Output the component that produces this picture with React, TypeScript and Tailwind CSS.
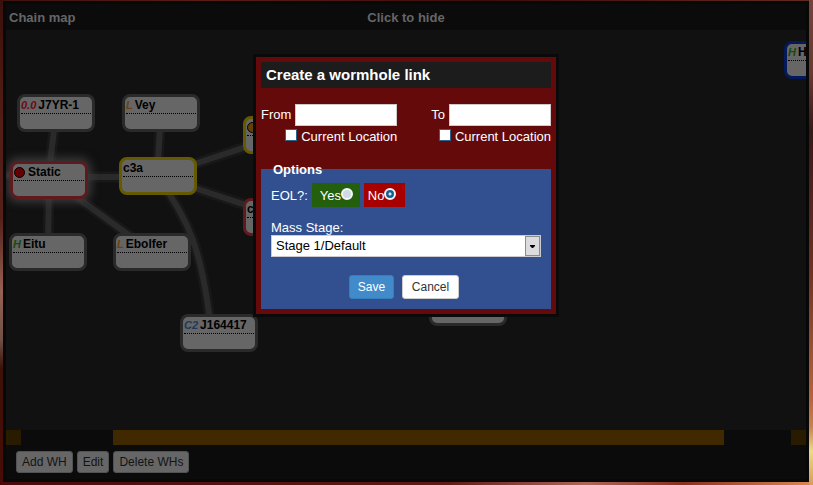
import { useState } from 'react';
import type { ReactNode } from 'react';

type NodeInfo = {
  id: string;
  name: string;
  place: string;
  look: string;
  tag?: string;
  tagColor?: string;
  dot?: string;
};

const nodes: NodeInfo[] = [
  { id: 'j7', name: 'J7YR-1', tag: '0.0', tagColor: 'text-[#6b0a14]', place: 'left-[11px] top-[64px]', look: 'border-[#2a2a2a]' },
  { id: 'vey', name: 'Vey', tag: 'L', tagColor: 'text-[#6b4310]', place: 'left-[116px] top-[64px]', look: 'border-[#2a2a2a]' },
  { id: 'static', name: 'Static', dot: 'bg-[#660000]', place: 'left-[4px] top-[131px]', look: 'border-[#5e1a1c] shadow-[0_0_10px_3px_#3c3c3c]' },
  { id: 'c3a', name: 'c3a', place: 'left-[113px] top-[127px]', look: 'border-[#665a00]' },
  { id: 'eitu', name: 'Eitu', tag: 'H', tagColor: 'text-[#154a10]', place: 'left-[3px] top-[203px]', look: 'border-[#2a2a2a]' },
  { id: 'ebolfer', name: 'Ebolfer', tag: 'L', tagColor: 'text-[#6b4310]', place: 'left-[107px] top-[203px]', look: 'border-[#2a2a2a]' },
  { id: 'j16', name: 'J164417', tag: 'C2', tagColor: 'text-[#1b3a5c]', place: 'left-[174px] top-[284px]', look: 'border-[#2a2a2a]' },
  { id: 'east', name: '', dot: 'bg-[#664200]', place: 'left-[237px] top-[86px]', look: 'border-[#665a00]' },
  { id: 'south', name: 'c', place: 'left-[237px] top-[168px]', look: 'border-[#5e1a1c]' },
  { id: 'far', name: '', place: 'left-[423px] top-[258px]', look: 'border-[#2a2a2a]' },
  { id: 'hs', name: 'H', tag: 'H', tagColor: 'text-[#154a10]', place: 'left-[778px] top-[11px]', look: 'border-[#04195c]' },
];

const links = [
  'M50 83 L42 150',
  'M155 83 L151 146',
  'M0 145 L43 150',
  'M43 147 L152 147',
  'M152 146 L276 105',
  'M152 146 L276 187',
  'M43 150 L42 222',
  'M43 147 L146 222',
  'M152 146 C180 190 195 210 205 300',
];

function MapNode({ node }: { node: NodeInfo }) {
  return (
    <div className={`absolute h-[38px] w-[78px] overflow-hidden rounded-lg border-[3px] bg-[#666] px-px ${node.place} ${node.look}`}>
      <div className="flex h-[17px] items-center gap-0.5 border-b border-dotted border-black text-xs font-bold whitespace-nowrap text-black">
        {node.dot && <span className={`mr-px h-[11px] w-[11px] shrink-0 rounded-full border border-black ${node.dot}`} />}
        {node.tag && <i className={`text-[11px] ${node.tagColor}`}>{node.tag}</i>}
        <span>{node.name}</span>
      </div>
    </div>
  );
}

function FooterButton({ children }: { children: ReactNode }) {
  return (
    <button type="button" className="h-[22px] rounded-[3px] border border-[#525252] bg-[#666] px-[5px] text-xs text-[#141414]">
      {children}
    </button>
  );
}

function Endpoint({ id, label }: { id: string; label: string }) {
  return (
    <div className="flex flex-col items-end">
      <div className="flex items-center gap-1">
        <label htmlFor={id}>{label}</label>
        <input id={id} type="text" className="h-[22px] w-[102px] border border-[#ccc] bg-white px-1 text-black" />
      </div>
      <label className="flex h-[22px] items-center gap-1">
        <input type="checkbox" className="mb-1 h-3 w-3 appearance-none border border-[#2c628b] bg-white checked:bg-[#2c628b]" />
        Current Location
      </label>
    </div>
  );
}

const radioClass =
  'mb-1 h-3 w-3 shrink-0 appearance-none rounded-full border-2 border-[#f2f6f9] bg-[#cfdae4] checked:bg-[radial-gradient(circle,#cfe6f5_1px,#14608f_2px)]';

function LinkDialog() {
  const [eol, setEol] = useState('no');
  return (
    <div className="absolute inset-x-0 top-[54px] flex justify-center pr-px">
      <form
        role="dialog"
        aria-labelledby="dialog-title"
        className="w-[306px] border-[3px] border-[#0a0a0a] bg-[#640a0a] p-[5px] text-[13px] leading-4 text-white"
      >
        <h2 id="dialog-title" className="h-[26px] bg-[#1c1c1c] px-[5px] text-[15px] leading-[26px] font-bold">
          Create a wormhole link
        </h2>
        <div className="mt-4 flex justify-between">
          <Endpoint id="from" label="From" />
          <Endpoint id="to" label="To" />
        </div>
        <fieldset className="mt-[13px] bg-[linear-gradient(#640a0a_8px,#32508f_8px)] px-[10px] pb-[10px]">
          <legend className="float-left h-4 w-full pl-0.5 leading-[18px] font-bold">Options</legend>
          <div className="clear-both flex h-[30px] items-end gap-1">
            <span className="flex h-6 items-center pt-0.5">EOL?:</span>
            <label className="flex h-6 w-12 items-center bg-[#235f0d] pt-0.5 pl-2">
              Yes
              <input type="radio" name="eol" checked={eol === 'yes'} onChange={() => setEol('yes')} className={radioClass} />
            </label>
            <label className="flex h-6 w-[41px] items-center bg-[#a60000] pt-0.5 pl-1">
              No
              <input type="radio" name="eol" checked={eol === 'no'} onChange={() => setEol('no')} className={radioClass} />
            </label>
          </div>
          <label htmlFor="mass" className="mt-3 block leading-[18px] h-4">
            Mass Stage:
          </label>
          <div className="relative">
            <select id="mass" className="block h-[22px] w-full appearance-none border border-[#ccc] bg-white px-1 text-black">
              <option>Stage 1/Default</option>
              <option>Stage 2</option>
              <option>Stage 3</option>
            </select>
            <span className="pointer-events-none absolute top-px right-px flex h-5 w-[15px] items-center justify-center border border-[#8c8c8c] bg-[#dcdcde]">
              <svg width="5" height="3" viewBox="0 0 5 3" aria-hidden="true">
                <path d="M0 0H5V1L3 3H2L0 1Z" fill="#000" />
              </svg>
            </span>
          </div>
          <div className="mt-[18px] flex justify-center gap-2 pr-1 text-xs">
            <button type="button" className="h-6 w-[45px] rounded-[3px] border border-[#357ebd] bg-[#428bca] text-white">
              Save
            </button>
            <button type="button" className="h-6 w-[57px] rounded-[3px] border border-[#ccc] bg-white text-[#333]">
              Cancel
            </button>
          </div>
        </fieldset>
      </form>
    </div>
  );
}

export default function App() {
  return (
    <div className="relative bg-[linear-gradient(90deg,#3e120b,#5a1d16_25%,#3e0d08_60%,#642a20)] font-['Liberation_Sans',Arial,sans-serif]">
      <div className="bg-[linear-gradient(90deg,#4a0c08,#5e1a14_55%,#b06458_72%,#87301f_84%,#d98b50)] bg-[length:100%_3px] bg-bottom bg-no-repeat">
        <div className="flex">
          <div className="w-[3px] shrink-0 bg-[linear-gradient(#3c100b,#541d17_25%,#54201a_45%,#986052_60%,#705048_70%,#3c1108_76%,#480c08)]" />
          <main className="mt-px mb-[3px] min-w-0 grow border-[3px] border-[#080808] bg-[#0b0b0b]">
            <header className="grid h-[26px] grid-cols-3 items-center px-[3px] pt-0.5 text-[13px] font-bold text-[#666]">
              <h1>Chain map</h1>
              <button type="button" className="text-center font-bold">
                Click to hide
              </button>
            </header>
            <section aria-label="Chain map" className="relative h-[400px] overflow-hidden bg-[#111]">
              <svg className="absolute inset-0 h-full w-full" fill="none" aria-hidden="true">
                <g stroke="#181818" strokeWidth="11">
                  {links.map((d) => (
                    <path key={d} d={d} />
                  ))}
                </g>
                <g stroke="#2a2a2a" strokeWidth="6">
                  {links.map((d) => (
                    <path key={d} d={d} />
                  ))}
                </g>
              </svg>
              {nodes.map((node) => (
                <MapNode key={node.id} node={node} />
              ))}
            </section>
            <div className="flex h-[15px] justify-between">
              <div className="w-[15px] bg-[#291b00]" />
              <div className="mr-[8.4%] ml-[11.5%] grow bg-[#402900]" />
              <div className="w-[15px] bg-[#291b00]" />
            </div>
            <footer className="flex h-[34px] items-center gap-1 px-[10px]">
              <FooterButton>Add WH</FooterButton>
              <FooterButton>Edit</FooterButton>
              <FooterButton>Delete WHs</FooterButton>
            </footer>
          </main>
          <div className="w-1 shrink-0 bg-[linear-gradient(#73443a,#693a30_15%,#351b17_27%,#6d3025_55%,#b5643b_82%,#c98249_88%,#eadb88_93%,#d99b59)]" />
        </div>
      </div>
      <LinkDialog />
    </div>
  );
}
